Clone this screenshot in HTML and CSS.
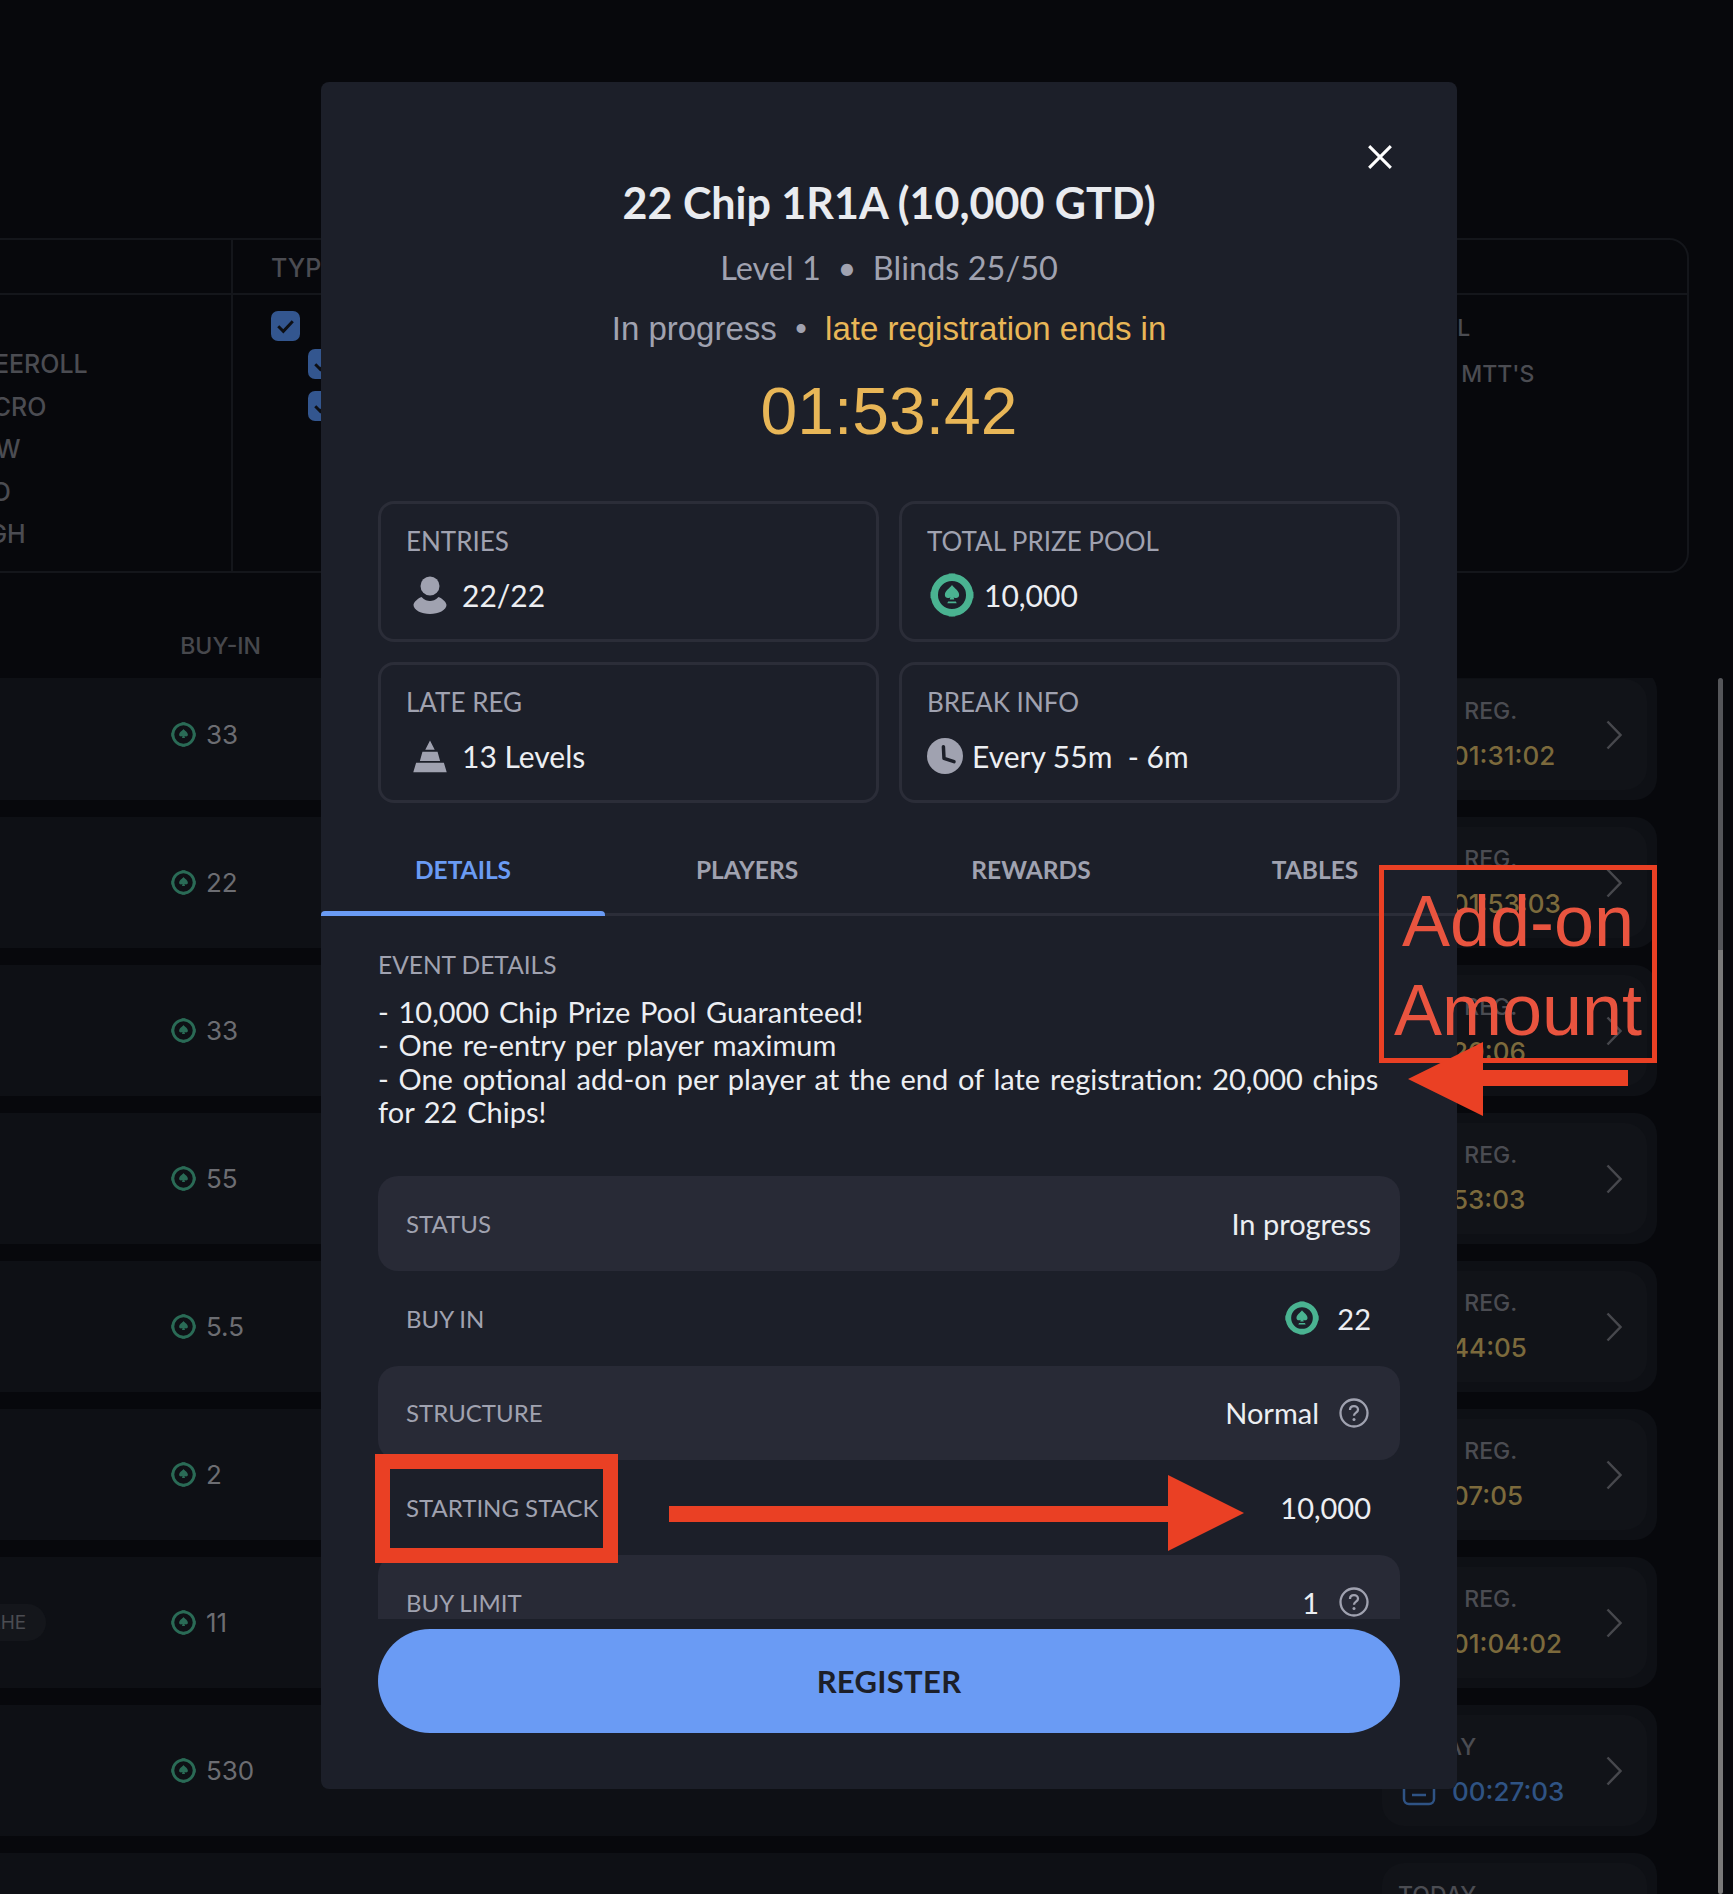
FILE: index.html
```html
<!DOCTYPE html>
<html lang="en">
<head>
  <meta charset="UTF-8">
  <meta name="viewport" content="width=device-width, initial-scale=1.0">
  <title>22 Chip 1R1A</title>
  <link rel="stylesheet" href="styles.css">
</head>
<body>

  <svg class="defs" width="0" height="0">
    <symbol id="chip" viewBox="0 0 40 40">
      <circle cx="20" cy="20" r="16" fill="none" stroke="currentColor" stroke-width="6.500"/>
      <path d="M17 .5h6v4h-6zM17 35.500h6v4h-6zM.5 17h4v6h-4zM35.500 17h4v6h-4z" fill="currentColor"/>
      <path d="M20 11c2 3 6.500 5 6.500 9 0 2.600-3 3.600-5 2l.6 2h-4.200l.6-2c-2 1.600-5 .6-5-2 0-4 4.500-6 6.500-9zM16.500 26h7l.8 1.500h-8.600z" fill="currentColor"/>
    </symbol>
    <symbol id="chip-line" viewBox="0 0 40 40">
      <circle cx="20" cy="20" r="17" fill="none" stroke="currentColor" stroke-width="4.500"/>
      <path d="M17 .5h6v3h-6zM17 36.500h6v3h-6zM.5 17h3v6h-3zM36.500 17h3v6h-3z" fill="currentColor"/>
      <path d="M20 11c2 3 7 5 7 9.500 0 2.600-3 3.600-5.400 2l.8 3h-4.800l.8-3c-2.400 1.600-5.400.6-5.400-2 0-4.500 5-6.500 7-9.500z" fill="currentColor"/>
    </symbol>
    <symbol id="help" viewBox="0 0 30 30">
      <circle cx="15" cy="15" r="13.500" fill="none" stroke="currentColor" stroke-width="2.300"/>
      <path d="M11 12c0-2.400 1.800-3.800 4-3.800s4 1.400 4 3.500c0 3-4 3-4 6" fill="none" stroke="currentColor" stroke-width="2.300"/>
      <circle cx="15" cy="21.500" r="1.500" fill="currentColor"/>
    </symbol>
    <symbol id="chevron" viewBox="0 0 16 30">
      <path d="M1.500 1.500L14.500 15L1.500 28.500" fill="none" stroke="currentColor" stroke-width="2.500"/>
    </symbol>
    <symbol id="calendar" viewBox="0 0 34 28">
      <path d="M2 1v20a5 5 0 0 0 5 5h20a5 5 0 0 0 5-5V1M10 17h14" fill="none" stroke="currentColor" stroke-width="2.500"/>
    </symbol>
  </svg>

  <!-- page behind the dialog -->
  <div class="page">
    <div class="filters">
      <div class="filter-col filter-speed">
        <div class="filter-head"></div>
        <div class="filter-list">
          <div>FREEROLL</div>
          <div>MICRO</div>
          <div>LOW</div>
          <div>MID</div>
          <div>HIGH</div>
        </div>
      </div>
      <div class="filter-col filter-type">
        <div class="filter-head">TYPE</div>
        <div class="filter-checks">
          <span class="check"><svg viewBox="0 0 20 20"><path d="M5 10.500l3.500 3.500L15 7" /></svg></span>
          <span class="check check-sub"><svg viewBox="0 0 20 20"><path d="M5 10.500l3.500 3.500L15 7" /></svg></span>
          <span class="check check-sub check-last"><svg viewBox="0 0 20 20"><path d="M5 10.500l3.500 3.500L15 7" /></svg></span>
        </div>
      </div>
      <div class="filter-col filter-extra">
        <div class="filter-head"></div>
        <div class="filter-list">
          <div class="filter-all">ALL</div>
          <div class="filter-mtt">DAILY MTT'S</div>
        </div>
      </div>
    </div>

    <div class="list-head">BUY-IN</div>

    <div class="rows">
      <div class="row">
        <div class="buyin"><svg class="chip-sm"><use href="#chip-line"/></svg>33</div>
        <div class="row-card">
          <div class="row-info"><div class="row-label">LATE REG.</div><div class="row-time"><svg class="cal"><use href="#calendar"/></svg>01:31:02</div></div>
          <svg class="chev"><use href="#chevron"/></svg>
        </div>
      </div>
      <div class="row">
        <div class="buyin"><svg class="chip-sm"><use href="#chip-line"/></svg>22</div>
        <div class="row-card">
          <div class="row-info"><div class="row-label">LATE REG.</div><div class="row-time"><svg class="cal"><use href="#calendar"/></svg>01:53:03</div></div>
          <svg class="chev"><use href="#chevron"/></svg>
        </div>
      </div>
      <div class="row">
        <div class="buyin"><svg class="chip-sm"><use href="#chip-line"/></svg>33</div>
        <div class="row-card">
          <div class="row-info"><div class="row-label">LATE REG.</div><div class="row-time"><svg class="cal"><use href="#calendar"/></svg>20:06</div></div>
          <svg class="chev"><use href="#chevron"/></svg>
        </div>
      </div>
      <div class="row">
        <div class="buyin"><svg class="chip-sm"><use href="#chip-line"/></svg>55</div>
        <div class="row-card">
          <div class="row-info"><div class="row-label">LATE REG.</div><div class="row-time"><svg class="cal"><use href="#calendar"/></svg>53:03</div></div>
          <svg class="chev"><use href="#chevron"/></svg>
        </div>
      </div>
      <div class="row">
        <div class="buyin"><svg class="chip-sm"><use href="#chip-line"/></svg>5.5</div>
        <div class="row-card">
          <div class="row-info"><div class="row-label">LATE REG.</div><div class="row-time"><svg class="cal"><use href="#calendar"/></svg>44:05</div></div>
          <svg class="chev"><use href="#chevron"/></svg>
        </div>
      </div>
      <div class="row">
        <div class="buyin"><svg class="chip-sm"><use href="#chip-line"/></svg>2</div>
        <div class="row-card">
          <div class="row-info"><div class="row-label">LATE REG.</div><div class="row-time"><svg class="cal"><use href="#calendar"/></svg>07:05</div></div>
          <svg class="chev"><use href="#chevron"/></svg>
        </div>
      </div>
      <div class="row">
        <span class="pill">LHE</span>
        <div class="buyin"><svg class="chip-sm"><use href="#chip-line"/></svg>11</div>
        <div class="row-card">
          <div class="row-info"><div class="row-label">LATE REG.</div><div class="row-time"><svg class="cal"><use href="#calendar"/></svg>01:04:02</div></div>
          <svg class="chev"><use href="#chevron"/></svg>
        </div>
      </div>
      <div class="row">
        <div class="buyin"><svg class="chip-sm"><use href="#chip-line"/></svg>530</div>
        <div class="row-card">
          <div class="row-info"><div class="row-label">TODAY</div><div class="row-time row-time-blue"><svg class="cal"><use href="#calendar"/></svg>00:27:03</div></div>
          <svg class="chev"><use href="#chevron"/></svg>
        </div>
      </div>
      <div class="row">
        <div class="row-card">
          <div class="row-info"><div class="row-label">TODAY</div><div class="row-time row-time-blue"><svg class="cal"><use href="#calendar"/></svg>00:40:03</div></div>
        </div>
      </div>
    </div>
  </div>

  <div class="scrollbar"></div>

  <!-- tournament dialog -->
  <div class="modal">
    <svg class="close" viewBox="0 0 24 24"><path d="M2 2l20 20M22 2L2 22"/></svg>

    <div class="modal-head">
      <h1>22 Chip 1R1A (10,000 GTD)</h1>
      <div class="level">Level 1 &nbsp;•&nbsp; Blinds 25/50</div>
      <div class="progress">In progress &nbsp;•&nbsp; <span class="gold">late registration ends in</span></div>
      <div class="timer">01:53:42</div>
    </div>

    <div class="stats">
      <div class="stat">
        <div class="stat-label">ENTRIES</div>
        <div class="stat-value">
          <svg class="stat-icon" viewBox="0 0 33 38"><circle cx="16.500" cy="10" r="9.500"/><path d="M8 21c3 3 6 4 8.500 4s5.500-1 8.500-4c5 2 8 6 8 8 0 5-8 9-16.500 9S0 34 0 29c0-2 3-6 8-8z"/></svg>
          22/22
        </div>
      </div>
      <div class="stat">
        <div class="stat-label">TOTAL PRIZE POOL</div>
        <div class="stat-value">
          <svg class="stat-chip"><use href="#chip"/></svg>
          10,000
        </div>
      </div>
      <div class="stat">
        <div class="stat-label">LATE REG</div>
        <div class="stat-value">
          <svg class="stat-icon" viewBox="0 0 36 37"><path d="M18 2l5 10H13zM10 14h16l2.700 9.700H7.300zM3.300 25.700h29.400l3 10H.3z"/></svg>
          13 Levels
        </div>
      </div>
      <div class="stat">
        <div class="stat-label">BREAK INFO</div>
        <div class="stat-value stat-value-clock">
          <svg class="stat-clock" viewBox="0 0 36 36"><circle cx="18" cy="18" r="18"/><path d="M16.400 8.700l.6 11.600 10 3.400" class="clock-hand"/></svg>
          Every 55m &nbsp;- 6m
        </div>
      </div>
    </div>

    <div class="tabs">
      <div class="tab tab-active">DETAILS</div>
      <div class="tab">PLAYERS</div>
      <div class="tab">REWARDS</div>
      <div class="tab">TABLES</div>
    </div>

    <div class="details">
      <div class="details-title">EVENT DETAILS</div>
      <p class="details-text">- 10,000 Chip Prize Pool Guaranteed!<br>- One re-entry per player maximum<br>- One optional add-on per player at the end of late registration: 20,000 chips for 22 Chips!</p>

      <div class="info-row info-alt"><span>STATUS</span><span class="info-val">In progress</span></div>
      <div class="info-row"><span>BUY IN</span><span class="info-val"><svg class="chip-info"><use href="#chip"/></svg>22</span></div>
      <div class="info-row info-alt"><span>STRUCTURE</span><span class="info-val">Normal<svg class="help"><use href="#help"/></svg></span></div>
      <div class="info-row"><span>STARTING STACK</span><span class="info-val">10,000</span></div>
      <div class="info-row info-alt"><span>BUY LIMIT</span><span class="info-val">1<svg class="help"><use href="#help"/></svg></span></div>
    </div>

    <button class="register">REGISTER</button>
  </div>

  <!-- red annotations drawn on top of the screenshot -->
  <div class="note note-addon">Add-on<br>Amount</div>
  <svg class="arrow arrow-left" viewBox="0 0 220 74"><path d="M0 37L75 0V28H220V44H75V74z"/></svg>
  <div class="note-stack"></div>
  <svg class="arrow arrow-right" viewBox="0 0 575 76"><path d="M0 31H499V0L575 38L499 76V47H0z"/></svg>

</body>
</html>
```

FILE: styles.css
```css
* {
  box-sizing: border-box;
}
html, body {
  margin: 0;
  height: 1894px;
}
body {
  position: relative;
  overflow: hidden;
  background: #07080c;
  font-family: Lato, 'Open Sans', sans-serif;
  color: #eceef2;
}
.defs {
  position: absolute;
}

/* background page */
.page {
  height: 1894px;
  padding-top: 238px;
  color: #4b4c52;
  font-family: Inter, sans-serif;
}
.filters {
  display: flex;
  width: 1749px;
  height: 335px;
  margin-left: -60px;
  border: 2px solid #14161b;
  border-radius: 20px;
  font-size: 25px;
  font-weight: 500;
}
.filter-col {
  border-right: 2px solid #14161b;
}
.filter-speed {
  width: 291px;
}
.filter-type {
  width: 1160px;
}
.filter-extra {
  flex: 1;
  border-right: none;
  font-size: 23px;
}
.filter-head {
  height: 55px;
  border-bottom: 2px solid #14161b;
  padding: 13px 0 0 38px;
}
.filter-list {
  padding-top: 54px;
  padding-left: 21px;
}
.filter-list div {
  height: 42.500px;
}
.filter-extra .filter-list {
  padding-top: 19px;
  padding-left: 0;
  margin-left: -4px;
}
.filter-all {
  margin-left: 39px;
}
.filter-mtt {
  margin-top: 3px;
}
.filter-checks {
  display: flex;
  flex-direction: column;
  align-items: flex-start;
  gap: 8px;
  padding: 16px 0 0 38px;
}
.check {
  width: 29px;
  height: 30px;
  border-radius: 7px;
  background: #33568f;
}
.check-sub {
  margin-left: 37px;
}
.check-last {
  margin-top: 4px;
}
.check svg {
  display: block;
  fill: none;
  stroke: #0d0f14;
  stroke-width: 2;
}
.list-head {
  width: 261px;
  height: 105px;
  padding-top: 59px;
  text-align: right;
  font-size: 23px;
  font-weight: 500;
  color: #47484d;
}
.rows {
  display: flex;
  flex-direction: column;
  gap: 17px;
  height: 1216px;
  overflow: hidden;
}
.row {
  flex: none;
  position: relative;
  display: flex;
  align-items: center;
  width: 1657px;
  height: 131px;
  padding-left: 171px;
  background: #0e1015;
  border-radius: 0 22px 22px 0;
}
/* first row is scrolled a little under the header */
.row:first-child {
  margin-top: -9px;
}
.buyin {
  display: flex;
  align-items: center;
  gap: 9px;
  font-size: 26px;
  color: #6c6d72;
}
.chip-sm {
  width: 25px;
  height: 25px;
  margin-right: 1px;
  color: #2a6b56;
}
.pill {
  position: absolute;
  left: -40px;
  padding: 7px 20px 7px 30px;
  border-radius: 19px;
  background: #14161b;
  font-size: 19px;
  color: #4b4c52;
}
.row-card {
  position: absolute;
  top: 10px;
  right: 10px;
  bottom: 10px;
  left: 1382px;
  display: flex;
  align-items: center;
  justify-content: space-between;
  padding: 0 25px 0 20px;
  border-radius: 22px;
  background: #111318;
}
.row-info {
  padding-bottom: 3px;
}
.row-label {
  margin-left: -4px;
  word-spacing: 4px;
  font-size: 23px;
  font-weight: 500;
  color: #4b4c52;
  line-height: 36px;
}
.row-time {
  display: flex;
  align-items: center;
  gap: 16px;
  font-size: 26px;
  font-weight: 500;
  color: #7c6a3c;
  line-height: 36px;
  margin-top: 9px;
}
.row-time-blue {
  color: #2f5384;
}
.cal {
  width: 34px;
  height: 28px;
}
.chev {
  width: 16px;
  height: 30px;
  color: #47484d;
}
.scrollbar {
  position: absolute;
  top: 678px;
  right: 10px;
  bottom: 0;
  width: 5px;
  border-radius: 3px;
  background: linear-gradient(#55565a 0, #55565a 272px, #7a7a7a 272px);
}

/* dialog */
.modal {
  position: absolute;
  top: 82px;
  left: 321px;
  width: 1136px;
  height: 1707px;
  padding: 0 57px;
  border-radius: 8px;
  background: #1c1f29;
}
.close {
  position: absolute;
  top: 62px;
  left: 1046px;
  width: 26px;
  height: 26px;
  fill: none;
  stroke: #fff;
  stroke-width: 2.800;
}
.modal-head {
  height: 419px;
  padding-top: 94px;
  text-align: center;
}
h1 {
  margin: 0;
  font-size: 43px;
  font-weight: 700;
  line-height: 54px;
  color: #e9ebef;
}
.level {
  margin-top: 16px;
  font-size: 32.500px;
  line-height: 44px;
  color: #a0a2b0;
}
.progress {
  margin-top: 17px;
  font-family: 'Liberation Sans', Arial, sans-serif;
  font-size: 33px;
  line-height: 44px;
  color: #a0a2b0;
}
.gold {
  color: #e8b657;
}
.timer {
  margin-top: 16px;
  font-family: 'Liberation Sans', Arial, sans-serif;
  font-size: 66px;
  line-height: 88px;
  color: #e8b657;
}
.stats {
  display: grid;
  grid-template-columns: 1fr 1fr;
  grid-auto-rows: 141px;
  gap: 20px;
}
.stat {
  padding: 21px 25px 0;
  border: 3px solid #2b2d38;
  border-radius: 16px;
}
.stat-label {
  font-size: 26px;
  line-height: 32px;
  color: #a0a2b0;
}
.stat-value {
  display: flex;
  align-items: center;
  gap: 15px;
  height: 44px;
  margin-top: 16px;
  padding-left: 7px;
  font-size: 30px;
}
.stat-value-clock {
  gap: 9px;
  padding-left: 0;
}
.stat-icon {
  flex: none;
  width: 34px;
  height: 38px;
  fill: #a0a2b0;
}
.stat-chip {
  width: 44px;
  height: 44px;
  margin-left: -4px;
  margin-right: -5px;
  color: #4ab391;
}
.stat-clock {
  width: 36px;
  height: 36px;
  fill: #a0a2b0;
}
.clock-hand {
  fill: none;
  stroke: #1c1f29;
  stroke-width: 3.500;
  stroke-linecap: round;
  stroke-linejoin: round;
}
.tabs {
  display: flex;
  height: 113px;
  margin: 0 -57px;
  border-bottom: 3px solid #2b2d38;
}
.tab {
  flex: 1;
  position: relative;
  padding-top: 52px;
  text-align: center;
  font-size: 24.500px;
  font-weight: 700;
  line-height: 30px;
  color: #a0a2b0;
}
.tab-active {
  color: #6a9bf4;
}
.tab-active::after {
  content: '';
  position: absolute;
  left: 0;
  right: 0;
  bottom: -3px;
  height: 5px;
  border-radius: 4px 4px 0 0;
  background: #6a9bf4;
}
.details {
  height: 703px;
  padding-top: 33px;
  overflow: hidden;
}
.details-title {
  font-size: 24.500px;
  line-height: 32px;
  color: #a0a2b0;
}
.details-text {
  margin: 14px 0 48px;
  font-size: 29px;
  line-height: 33.300px;
  word-spacing: 2.300px;
}
.info-row {
  display: flex;
  align-items: center;
  justify-content: space-between;
  height: 94.700px;
  padding: 0 29px 0 28px;
  border-radius: 20px;
  font-size: 24px;
  color: #a0a2b0;
}
.info-alt {
  background: #282a36;
}
.info-val {
  display: flex;
  align-items: center;
  font-size: 29px;
  color: #eceef2;
}
.chip-info {
  width: 34px;
  height: 34px;
  margin-right: 18px;
  color: #4ab391;
}
.help {
  width: 30px;
  height: 30px;
  margin-left: 20px;
  margin-right: 2px;
  color: #a0a2b0;
}
.register {
  display: block;
  width: 100%;
  height: 104px;
  margin-top: 10px;
  border: none;
  border-radius: 52px;
  background: #6a9bf4;
  font-family: Lato, 'Open Sans', sans-serif;
  font-size: 31px;
  font-weight: 700;
  letter-spacing: .3px;
  color: #1c1f29;
}

/* annotations */
.note {
  position: absolute;
  top: 865px;
  left: 1379px;
  width: 278px;
  height: 198px;
  padding-top: 7px;
  border: 5px solid #ea4024;
  text-align: center;
  font-family: 'Liberation Sans', Arial, sans-serif;
  font-size: 72px;
  line-height: 89px;
  color: #e9543f;
}
.note-stack {
  position: absolute;
  top: 1454px;
  left: 375px;
  width: 243px;
  height: 109px;
  border: 15px solid #ea4024;
}
.arrow {
  position: absolute;
  fill: #ea4024;
}
.arrow-left {
  top: 1042px;
  left: 1408px;
  width: 220px;
  height: 74px;
}
.arrow-right {
  top: 1475px;
  left: 669px;
  width: 575px;
  height: 76px;
}
```
